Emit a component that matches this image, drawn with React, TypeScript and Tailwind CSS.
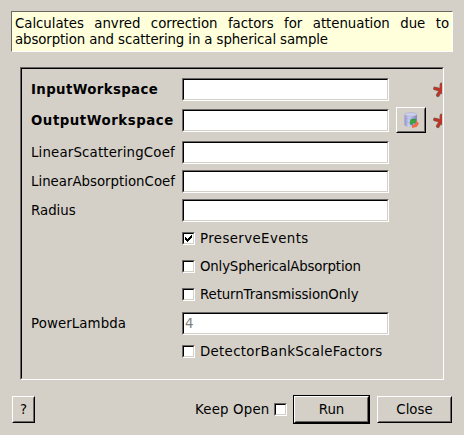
import React from "react";

const SUNKEN =
  "border border-t-[#6a6764] border-l-[#6a6764] border-b-white border-r-white";
const SUNKEN_INNER =
  "border border-t-black border-l-black border-b-[#d4d0c8] border-r-[#d4d0c8]";
const RAISED = "border border-t-white border-l-white border-b-black border-r-black";
const RAISED_INNER =
  "border border-t-[#d4d0c8] border-l-[#d4d0c8] border-b-[#6a6764] border-r-[#6a6764]";

function Field({ value = "" }: { value?: string }) {
  return (
    <div className={`h-[23px] w-[207px] shrink-0 ${SUNKEN}`}>
      <div className={`flex h-full items-center bg-white pl-px text-[#808080] ${SUNKEN_INNER}`}>
        {value}
      </div>
    </div>
  );
}

function Box({ checked = false }: { checked?: boolean }) {
  return (
    <div className={`size-[13px] shrink-0 ${SUNKEN}`}>
      <div className={`size-full bg-white ${SUNKEN_INNER}`}>
        {checked && (
          <svg width="9" height="9" viewBox="0 0 9 9" shapeRendering="crispEdges">
            <path d="M1 3h1v1h1v1h1v-1h1v-1h1v-1h1v-1h1v3h-1v1h-1v1h-1v1h-1v1h-1v-1h-1v-1h-1z" />
          </svg>
        )}
      </div>
    </div>
  );
}

function Asterisk() {
  return (
    <svg width="10" height="16" viewBox="0 0 10 16" className="shrink-0">
      <g fill="none" strokeLinecap="round">
        <path d="M8.5 2.5L8.2 7.5M2 6.5L8 8L4.8 13.2M8 8L11 12" stroke="#80675d" strokeWidth="3.8" />
        <path d="M8.5 2.5L8.2 7.5M2 6.5L8 8L4.8 13.2M8 8L11 12" stroke="#bd3426" strokeWidth="2.5" />
      </g>
    </svg>
  );
}

function DatabaseIcon() {
  return (
    <svg width="16" height="16" viewBox="0 0 16 16">
      <defs>
        <linearGradient id="drum" x1="0" x2="1">
          <stop offset="0" stopColor="#8d90c4" />
          <stop offset="0.35" stopColor="#ced2f2" />
          <stop offset="1" stopColor="#7a7fb8" />
        </linearGradient>
      </defs>
      <path d="M1.500 2.500v10q0 2.200 6.250 2.200t6.250-2.200v-10z" fill="url(#drum)" />
      <ellipse cx="7.750" cy="2.500" rx="6.200" ry="1.900" fill="#cccfea" stroke="#a9acd2" strokeWidth="0.600" />
      <path d="M1.500 6q6.250 2.500 12.500 0M1.500 9.500q6.250 2.500 12.500 0" fill="none" stroke="#a3a6d9" strokeWidth="0.600" />
      <path d="M7.300 12.500V9.500q0-2.500 2.700-2.500h2.500v4.500l-1.500-1q-1.500 0-1.500 2z" fill="#35a83c" stroke="#278637" strokeWidth="0.500" />
      <path d="M13.300 8.500q2.700 2 2.200 4l-2 2.500-4.500 1v-3.500l1.700.7q2-1 2.600-4.700z" fill="#f06a45" />
    </svg>
  );
}

function Row({ label, labelClass = "", className = "", children }: {
  label: string;
  labelClass?: string;
  className?: string;
  children: React.ReactNode;
}) {
  return (
    <div className={`flex items-center ${className}`}>
      <div className={`w-[151px] shrink-0 ${labelClass}`}>{label}</div>
      {children}
    </div>
  );
}

function CheckRow({ label, checked, className = "" }: {
  label: string;
  checked?: boolean;
  className?: string;
}) {
  return (
    <div className={`ml-[151px] flex h-[13px] items-center gap-[5px] ${className}`}>
      <Box checked={checked} />
      <span>{label}</span>
    </div>
  );
}

export default function App() {
  return (
    <div className="flex h-[435px] w-[464px] flex-col overflow-hidden bg-[#d4d0c8] pt-[11px] font-['DejaVu_Sans',sans-serif] text-[13.33px] leading-4 whitespace-nowrap text-black">
      <div className={`ml-[11px] h-[41px] w-[442px] bg-[#ffffdc] px-[3px] pt-1 ${SUNKEN}`}>
        <div className="tracking-[-0.04px] [text-align-last:justify]">
          Calculates anvred correction factors for attenuation due to
        </div>
        <div className="tracking-[-0.11px]">absorption and scattering in a spherical sample</div>
      </div>

      <div className={`mt-[15px] ml-5 h-[313px] w-[424px] shrink-0 ${SUNKEN}`}>
        <div className={`flex h-full flex-col overflow-hidden pt-[9px] pl-[9px] ${SUNKEN_INNER}`}>
          <Row label="InputWorkspace" labelClass="font-bold tracking-[0.36px]" className="h-[23px]">
            <Field />
            <div className="ml-[44px]"><Asterisk /></div>
          </Row>
          <Row label="OutputWorkspace" labelClass="font-bold tracking-[0.53px] pt-0.5" className="mt-[6px] h-[26px]">
            <Field />
            <div className={`ml-[7px] h-[26px] w-[30px] shrink-0 ${RAISED}`}>
              <div className={`flex h-full items-center justify-center ${RAISED_INNER}`}>
                <DatabaseIcon />
              </div>
            </div>
            <div className="ml-[7px] pt-0.5"><Asterisk /></div>
          </Row>
          <Row label="LinearScatteringCoef" labelClass="tracking-[0.17px]" className="mt-[8px] h-[23px]"><Field /></Row>
          <Row label="LinearAbsorptionCoef" className="mt-[6px] h-[23px]"><Field /></Row>
          <Row label="Radius" className="mt-[6px] h-[23px]"><Field /></Row>
          <CheckRow label="PreserveEvents" checked className="mt-[10px] tracking-[0.4px]" />
          <CheckRow label="OnlySphericalAbsorption" className="mt-[15px] tracking-[-0.17px]" />
          <CheckRow label="ReturnTransmissionOnly" className="mt-[15px] tracking-[-0.11px]" />
          <Row label="PowerLambda" labelClass="tracking-[0.1px]" className="mt-[11px] h-[23px]"><Field value="4" /></Row>
          <CheckRow label="DetectorBankScaleFactors" className="mt-[10px] tracking-[0.31px]" />
        </div>
      </div>

      <div className="mt-[15px] flex h-[29px] items-center pl-3">
        <div className={`h-[27px] w-[23px] ${RAISED}`}>
          <div className={`flex h-full items-center justify-center ${RAISED_INNER}`}>?</div>
        </div>
        <div className="ml-[160px] w-[79px] tracking-[0.18px]">Keep Open</div>
        <Box />
        <div className="ml-[6px] h-[29px] w-[77px] border border-black">
          <div className={`h-full ${RAISED}`}>
            <div className={`flex h-full items-center justify-center ${RAISED_INNER}`}>Run</div>
          </div>
        </div>
        <div className={`ml-[7px] h-[27px] w-[75px] ${RAISED}`}>
          <div className={`flex h-full items-center justify-center ${RAISED_INNER}`}>Close</div>
        </div>
      </div>
    </div>
  );
}
